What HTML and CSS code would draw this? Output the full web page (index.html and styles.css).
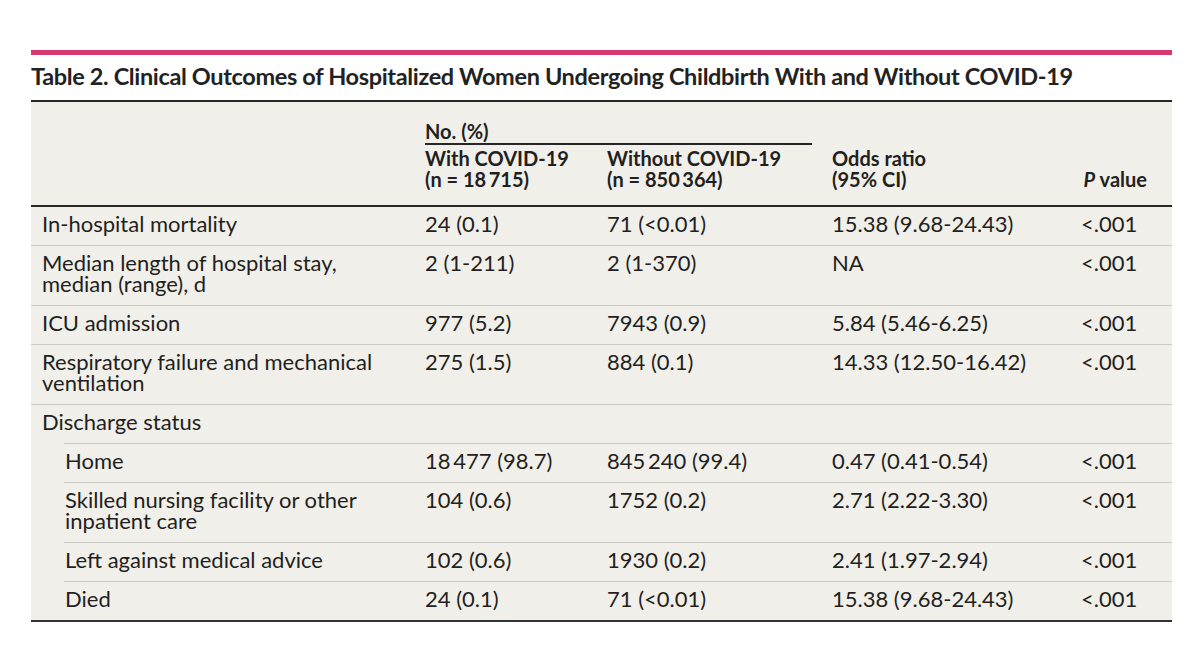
FILE: index.html
```html
<!DOCTYPE html>
<html>
<head>
<meta charset="utf-8">
<link rel="stylesheet" href="styles.css">
</head>
<body>
<div class="page">
  <div class="accent"></div>
  <h1 class="title">Table 2. Clinical Outcomes of Hospitalized Women Undergoing Childbirth With and Without COVID-19</h1>
  <div class="table">
    <div class="thead">
      <div class="c1"></div>
      <div class="group">
        <div class="group-label">No. (%)</div>
        <div class="group-cols">
          <div class="c2">With COVID-19<br>(n = 18&#8201;715)</div>
          <div class="c3">Without COVID-19<br>(n = 850&#8201;364)</div>
        </div>
      </div>
      <div class="c4">Odds ratio<br>(95% CI)</div>
      <div class="c5 pv"><i>P</i> value</div>
    </div>
    <div class="row">
      <div class="c1">In-hospital mortality</div>
      <div class="c2">24 (0.1)</div>
      <div class="c3">71 (&lt;0.01)</div>
      <div class="c4">15.38 (9.68-24.43)</div>
      <div class="c5">&lt;.001</div>
    </div>
    <div class="row">
      <div class="c1">Median length of hospital stay,<br>median (range), d</div>
      <div class="c2">2 (1-211)</div>
      <div class="c3">2 (1-370)</div>
      <div class="c4">NA</div>
      <div class="c5">&lt;.001</div>
    </div>
    <div class="row">
      <div class="c1">ICU admission</div>
      <div class="c2">977 (5.2)</div>
      <div class="c3">7943 (0.9)</div>
      <div class="c4">5.84 (5.46-6.25)</div>
      <div class="c5">&lt;.001</div>
    </div>
    <div class="row">
      <div class="c1">Respiratory failure and mechanical<br>ventilation</div>
      <div class="c2">275 (1.5)</div>
      <div class="c3">884 (0.1)</div>
      <div class="c4">14.33 (12.50-16.42)</div>
      <div class="c5">&lt;.001</div>
    </div>
    <div class="row">
      <div class="c1">Discharge status</div>
      <div class="c2"></div>
      <div class="c3"></div>
      <div class="c4"></div>
      <div class="c5"></div>
    </div>
    <div class="row sub">
      <div class="c1">Home</div>
      <div class="c2">18&#8201;477 (98.7)</div>
      <div class="c3">845&#8201;240 (99.4)</div>
      <div class="c4">0.47 (0.41-0.54)</div>
      <div class="c5">&lt;.001</div>
    </div>
    <div class="row sub">
      <div class="c1">Skilled nursing facility or other<br>inpatient care</div>
      <div class="c2">104 (0.6)</div>
      <div class="c3">1752 (0.2)</div>
      <div class="c4">2.71 (2.22-3.30)</div>
      <div class="c5">&lt;.001</div>
    </div>
    <div class="row sub">
      <div class="c1">Left against medical advice</div>
      <div class="c2">102 (0.6)</div>
      <div class="c3">1930 (0.2)</div>
      <div class="c4">2.41 (1.97-2.94)</div>
      <div class="c5">&lt;.001</div>
    </div>
    <div class="row sub">
      <div class="c1">Died</div>
      <div class="c2">24 (0.1)</div>
      <div class="c3">71 (&lt;0.01)</div>
      <div class="c4">15.38 (9.68-24.43)</div>
      <div class="c5">&lt;.001</div>
    </div>
  </div>
</div>
</body>
</html>
```
FILE: styles.css
```css
html, body {
  margin: 0;
  padding: 0;
  background: #ffffff;
}
body {
  font-family: Lato, "Open Sans", sans-serif;
  color: #231f20;
}
.page {
  width: 1141px;
  margin-left: 31px;
  padding-top: 50px;
}
.accent {
  height: 5px;
  background: #d63a6f;
}
.title {
  margin: 6px 0 9px 0;
  font-size: 23.5px;
  line-height: 30px;
  letter-spacing: -0.35px;
  font-weight: 700;
  color: #222222;
  white-space: nowrap;
}
.table {
  border-top: 2px solid #262626;
  border-bottom: 2px solid #333333;
  background: #f1efe9;
  font-size: 22px;
  line-height: 21px;
}
.c1 { width: 383px; padding-left: 11px; box-sizing: border-box; flex: none; }
.c2 { width: 182px; padding-left: 11px; box-sizing: border-box; flex: none; }
.c3 { width: 225px; padding-left: 11px; box-sizing: border-box; flex: none; }
.c4 { width: 239px; padding-left: 11px; box-sizing: border-box; flex: none; }
.c5 { width: 112px; padding-left: 21px; box-sizing: border-box; flex: none; }

.thead {
  display: flex;
  align-items: flex-end;
  padding: 19px 0 15px 0;
  border-bottom: 2px solid #262626;
  font-size: 20px;
  line-height: 21px;
  font-weight: 700;
}
.group {
  width: 407px;
  flex: none;
}
.group-label {
  margin: 0 9px 0 11px;
  padding-bottom: 1px;
  border-bottom: 2px solid #262626;
}
.group-cols {
  display: flex;
  margin-top: 3px;
}
.thead .pv {
  text-align: right;
  padding-left: 0;
  padding-right: 25px;
}
.row {
  display: flex;
  padding: 6px 0 11px 0;
}
.row + .row {
  border-top: 1px solid #cbc9c3;
}
.row.sub {
  margin-left: 33px;
}
.row.sub .c1 {
  width: 350px;
  padding-left: 1px;
}
```
